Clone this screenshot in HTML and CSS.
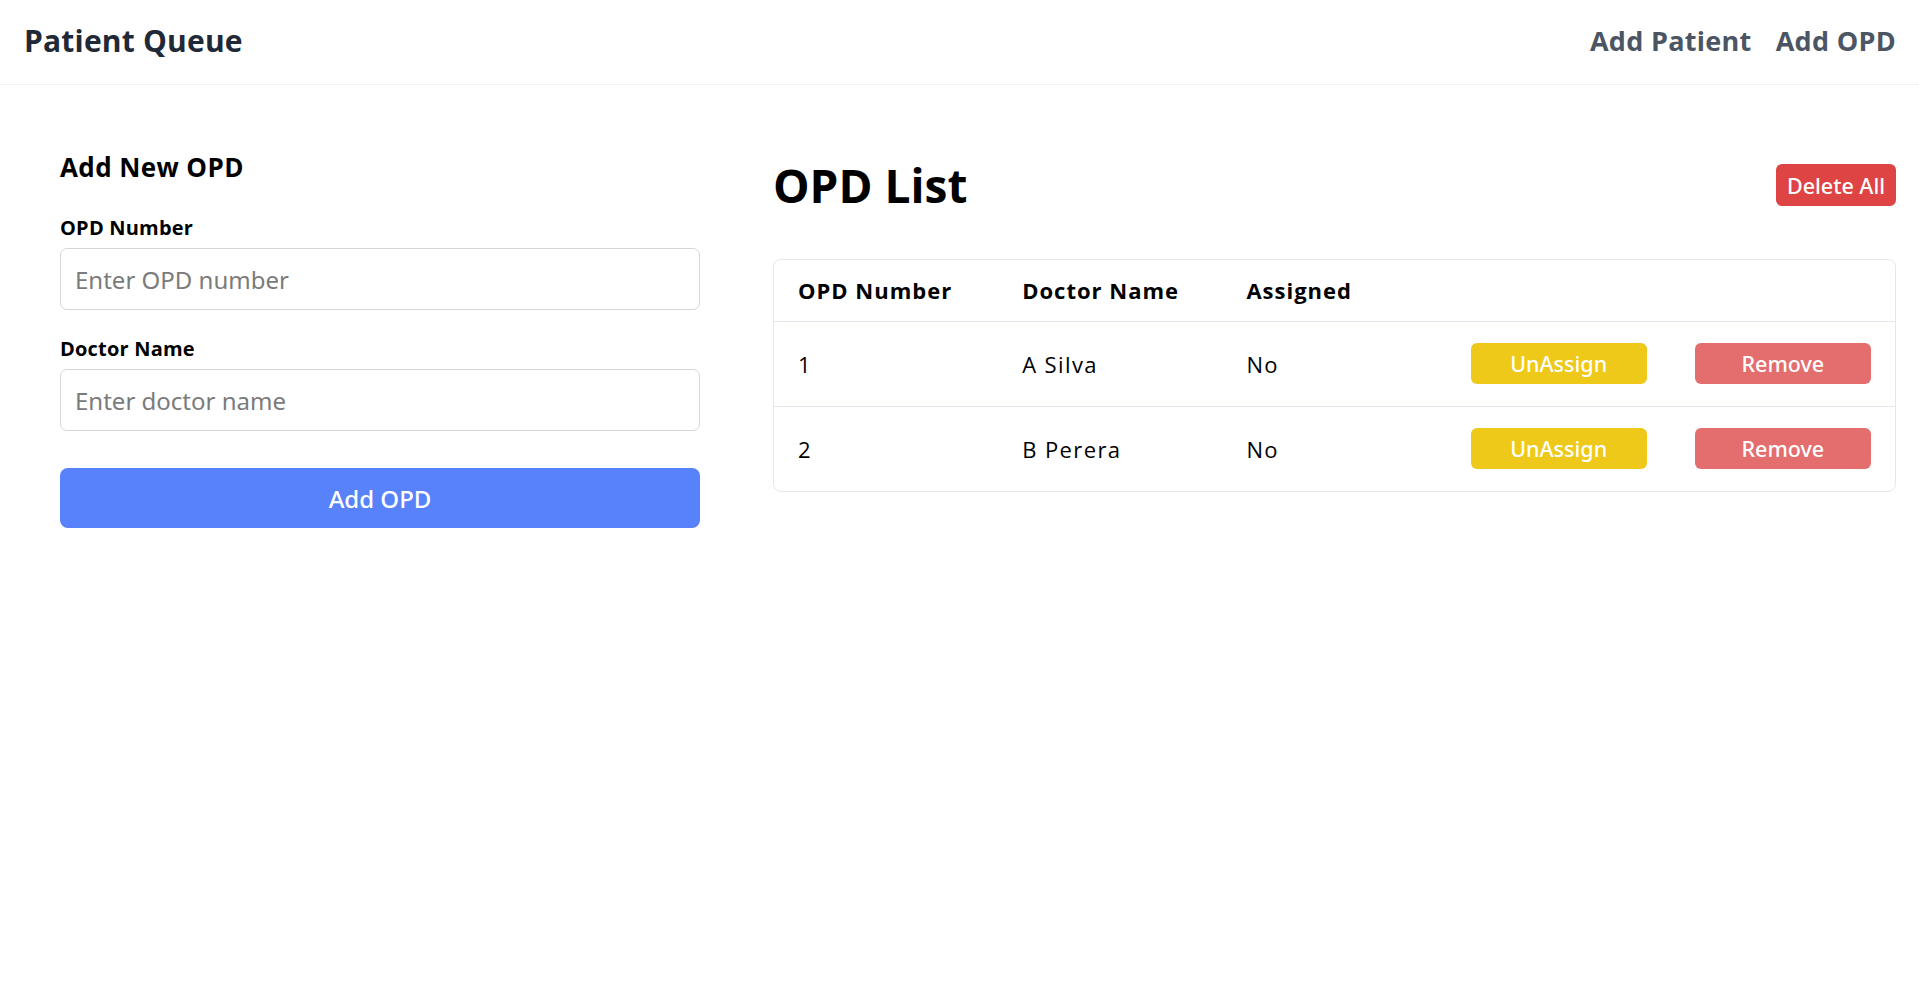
FILE: index.html
```html
<!DOCTYPE html>
<html lang="en">
<head>
<meta charset="utf-8">
<title>Patient Queue</title>
<link rel="stylesheet" href="styles.css">
</head>
<body>
<header class="topbar">
  <div class="brand">Patient Queue</div>
  <nav class="nav">
    <a class="nav-link" href="#">Add Patient</a>
    <a class="nav-link" href="#">Add OPD</a>
  </nav>
</header>
<main class="main">
  <section class="form-col">
    <h2 class="form-title">Add New OPD</h2>
    <form class="form">
      <label class="field">
        <span class="label">OPD Number</span>
        <input class="input" type="text" placeholder="Enter OPD number">
      </label>
      <label class="field">
        <span class="label">Doctor Name</span>
        <input class="input" type="text" placeholder="Enter doctor name">
      </label>
      <button class="btn-primary" type="button">Add OPD</button>
    </form>
  </section>
  <section class="list-col">
    <div class="list-head">
      <h1 class="list-title">OPD List</h1>
      <button class="btn btn-danger" type="button">Delete All</button>
    </div>
    <div class="table-wrap">
      <table class="table">
        <thead>
          <tr><th>OPD Number</th><th>Doctor Name</th><th>Assigned</th><th></th><th></th></tr>
        </thead>
        <tbody>
          <tr>
            <td>1</td><td>A Silva</td><td>No</td>
            <td><button class="btn btn-row btn-yellow" type="button">UnAssign</button></td>
            <td><button class="btn btn-row btn-remove" type="button">Remove</button></td>
          </tr>
          <tr>
            <td>2</td><td>B Perera</td><td>No</td>
            <td><button class="btn btn-row btn-yellow" type="button">UnAssign</button></td>
            <td><button class="btn btn-row btn-remove" type="button">Remove</button></td>
          </tr>
        </tbody>
      </table>
    </div>
  </section>
</main>
</body>
</html>
```
FILE: styles.css
```css
* { box-sizing: border-box; }
html, body { margin: 0; padding: 0; background: #fff; }
body {
  font-family: "Open Sans", "Noto Sans", sans-serif;
  color: #000;
}
.topbar {
  height: 85px;
  display: flex;
  align-items: center;
  justify-content: space-between;
  padding: 0 23px 3px 24px;
  border-bottom: 1px solid #f1f2f4;
}
.brand {
  font-size: 30px;
  font-weight: 700;
  color: #1f2937;
  letter-spacing: 0.2px;
}
.nav { display: flex; gap: 24px; }
.nav-link {
  font-size: 27px;
  font-weight: 700;
  color: #4b5563;
  text-decoration: none;
  letter-spacing: 0.3px;
}
.main {
  display: flex;
  padding: 0 23px 0 60px;
  gap: 73px;
}
.form-col { width: 640px; flex: none; padding-top: 65px; }
.form-title {
  margin: 0 0 31px;
  font-size: 26px;
  font-weight: 700;
  line-height: 34px;
  letter-spacing: 0.4px;
}
.form { display: flex; flex-direction: column; }
.field { display: flex; flex-direction: column; margin-bottom: 26px; }
.label {
  font-size: 20px;
  font-weight: 700;
  line-height: 26px;
  margin-bottom: 7px;
  letter-spacing: 0.2px;
}
.input {
  height: 62px;
  border: 1px solid #d4d6dc;
  border-radius: 7px;
  padding: 0 14px;
  font-family: "Noto Sans", sans-serif;
  font-size: 24px;
  color: #111;
  outline: none;
}
.input::placeholder { color: #7b7b7b; }
.btn-primary {
  margin-top: 11px;
  height: 60px;
  border: none;
  border-radius: 8px;
  background: #5882fc;
  color: #fff;
  font-family: "Noto Sans", sans-serif;
  font-size: 24px;
  font-weight: 500;
}
.list-col { flex: 1; min-width: 0; padding-top: 79px; }
.list-head {
  display: flex;
  justify-content: space-between;
  align-items: center;
  height: 42px;
  margin-bottom: 53px;
}
.list-title {
  margin: 0;
  font-size: 46px;
  font-weight: 700;
  line-height: 42px;
}
.btn {
  border: none;
  color: #fff;
  font-family: "Noto Sans", sans-serif;
  font-size: 21.5px;
  font-weight: 500;
  cursor: pointer;
}
.btn-danger {
  height: 42px;
  padding: 0 11px;
  border-radius: 6px;
  background: #de4444;
}
.table-wrap {
  border: 1px solid #e6e7ee;
  border-radius: 8px;
  overflow: hidden;
}
.table {
  width: 100%;
  border-collapse: collapse;
  table-layout: fixed;
}
.table th, .table td {
  padding: 0 24px;
  text-align: left;
  font-size: 22px;
}
.table th { height: 61px; font-weight: 700; letter-spacing: 1px; }
.table td { height: 85px; border-top: 1px solid #e6e7ee; letter-spacing: 1.4px; }
.table td .btn-row { letter-spacing: 0; }
.btn-row {
  width: 100%;
  height: 41px;
  border-radius: 6px;
}
.btn-yellow { background: #eec91a; }
.btn-remove { background: #e36e6d; }
```
